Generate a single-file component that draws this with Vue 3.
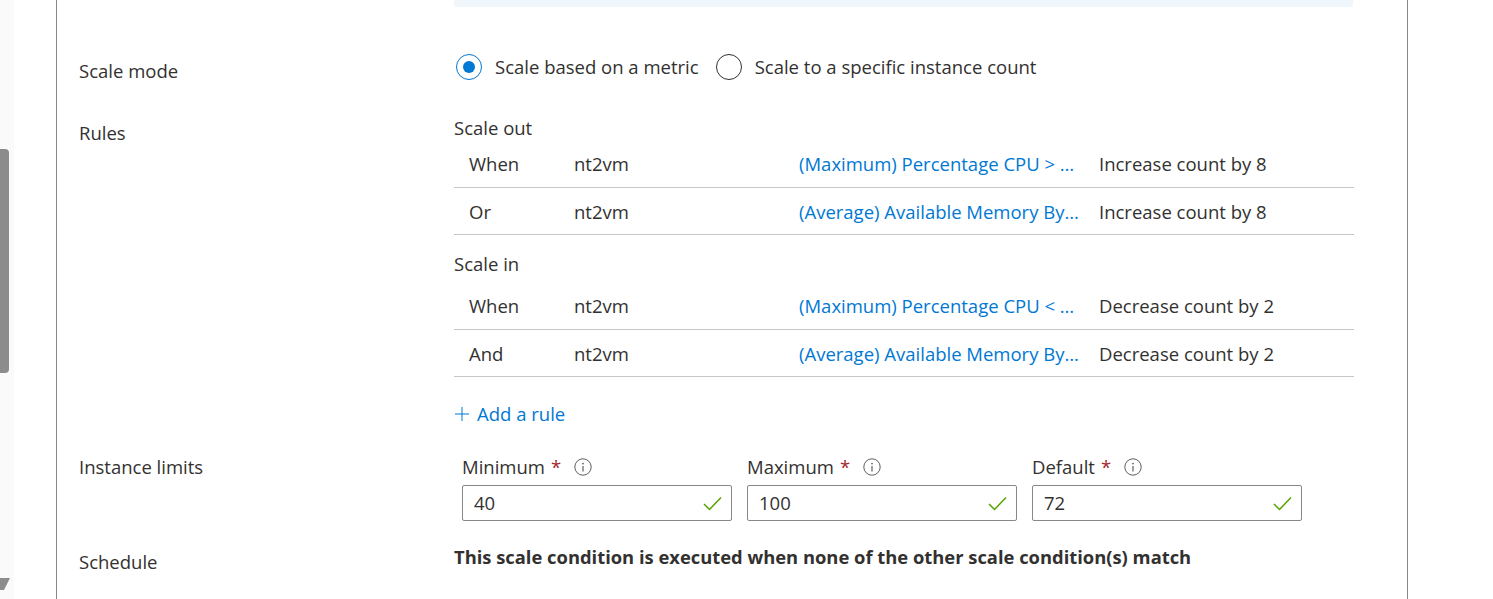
<script setup>
const groups = [
  { title: 'Scale out', rows: [
    { cond: 'When', res: 'nt2vm', metric: '(Maximum) Percentage CPU > 70 percent', action: 'Increase count by 8' },
    { cond: 'Or', res: 'nt2vm', metric: '(Average) Available Memory Bytes < 1 GB', action: 'Increase count by 8' }
  ]},
  { title: 'Scale in', rows: [
    { cond: 'When', res: 'nt2vm', metric: '(Maximum) Percentage CPU < 30 percent', action: 'Decrease count by 2' },
    { cond: 'And', res: 'nt2vm', metric: '(Average) Available Memory Bytes > 4 GB', action: 'Decrease count by 2' }
  ]}
]
const limits = [
  { label: 'Minimum', value: '40' },
  { label: 'Maximum', value: '100' },
  { label: 'Default', value: '72' }
]
</script>

<template>
  <div class="page">
    <aside class="track">
      <div class="thumb"></div>
      <div class="arrow"></div>
    </aside>
    <main class="card">
      <div class="banner"></div>

      <section class="row mode-row">
        <div class="label">Scale mode</div>
        <div class="radios">
          <div class="radio-item first">
            <span class="radio on"><span class="dot"></span></span>
            <span>Scale based on a metric</span>
          </div>
          <div class="radio-item">
            <span class="radio"></span>
            <span>Scale to a specific instance count</span>
          </div>
        </div>
      </section>

      <section class="row rules-row">
        <div class="label">Rules</div>
        <div class="rules">
          <div v-for="g in groups" :key="g.title" class="group">
            <div class="group-title">{{ g.title }}</div>
            <div v-for="r in g.rows" :key="r.metric" class="rule">
              <span class="c-cond">{{ r.cond }}</span>
              <span class="c-res">{{ r.res }}</span>
              <a class="c-metric">{{ r.metric }}</a>
              <span class="c-action">{{ r.action }}</span>
            </div>
          </div>
          <a class="add">
            <svg width="16" height="16" viewBox="0 0 16 16"><path d="M8 1v14M1 8h14" stroke="#0078d4" stroke-width="1" fill="none"/></svg>
            <span>Add a rule</span>
          </a>
        </div>
      </section>

      <section class="row limits-row">
        <div class="label">Instance limits</div>
        <div class="limits">
          <div v-for="l in limits" :key="l.label" class="limit">
            <div class="limit-label">
              <span>{{ l.label }}</span>
              <span class="req">*</span>
              <svg class="info" width="18" height="18" viewBox="0 0 18 18">
                <circle cx="9" cy="9" r="8.2" fill="none" stroke="#605e5c" stroke-width="1"/>
                <circle cx="9" cy="5.6" r="0.9" fill="#605e5c"/>
                <path d="M9 8v5.4" stroke="#605e5c" stroke-width="1.2"/>
              </svg>
            </div>
            <div class="input">
              <span>{{ l.value }}</span>
              <svg width="19" height="15" viewBox="0 0 19 15"><path d="M1 8l5.5 5.5L18 1.5" fill="none" stroke="#57a300" stroke-width="1.5"/></svg>
            </div>
          </div>
        </div>
      </section>

      <section class="row schedule-row">
        <div class="label">Schedule</div>
        <div class="bold">This scale condition is executed when none of the other scale condition(s) match</div>
      </section>
    </main>
  </div>
</template>

<style scoped>
.page {
  display: flex;
  height: 599px;
  overflow: hidden;
  background: #fff;
  color: #323130;
  font-family: "Open Sans", "Noto Sans", sans-serif;
  font-size: 18.5px;
  line-height: 26px;
}
.track {
  position: relative;
  flex: 0 0 14px;
  background: #fafafa;
}
.thumb {
  position: absolute;
  left: 0;
  top: 149px;
  width: 9px;
  height: 224px;
  background: #8c8c8c;
  border-radius: 0 4px 4px 0;
}
.arrow {
  position: absolute;
  left: 0;
  top: 578px;
  width: 10px;
  height: 12px;
  background: #8c8c8c;
  clip-path: polygon(0 0, 100% 0, 40% 100%, 0 100%);
}
.card {
  flex: 0 0 1352px;
  margin-left: 42px;
  box-sizing: border-box;
  height: 599px;
  border-left: 1px solid #8a8886;
  border-right: 1px solid #8a8886;
  padding-left: 22px;
}
.banner {
  margin-left: 375px;
  width: 899px;
  height: 7px;
  background: #eff6fc;
  border-radius: 0 0 2px 2px;
}
.row { display: flex; }
.label { flex: 0 0 375px; }
.mode-row { margin-top: 47px; }
.mode-row .label { padding-top: 4px; }
.radios { display: flex; align-items: flex-start; }
.radio-item { display: flex; align-items: center; gap: 13px; height: 26px; }
.radio-item.first { margin-right: 17px; }
.radio {
  box-sizing: border-box;
  width: 26px;
  height: 26px;
  border: 1px solid #323130;
  border-radius: 50%;
  display: flex;
  align-items: center;
  justify-content: center;
}
.radio.on { border-color: #0078d4; margin-left: 2px; }
.dot { width: 12px; height: 12px; border-radius: 50%; background: #0078d4; }
.rules-row { margin-top: 29px; }
.rules-row .label { padding-top: 11px; margin-top: -4px; }
.rules { width: 900px; }
.group-title { height: 26px; padding-top: 2px; }
.group + .group { margin-top: 14px; }
.group + .group .group-title { height: 32px; }
.rule {
  display: flex;
  align-items: center;
  height: 47px;
  box-sizing: border-box;
  border-bottom: 1px solid #c8c6c4;
  padding-left: 15px;
}
.rule:last-child { padding-top: 2px; }
.c-cond { flex: 0 0 105px; }
.c-res { flex: 0 0 225px; }
.c-metric {
  flex: 0 0 285px;
  margin-right: 15px;
  color: #0078d4;
  white-space: nowrap;
  overflow: hidden;
  text-overflow: ellipsis;
}
.c-action { white-space: nowrap; }
.add {
  display: flex;
  align-items: center;
  gap: 7px;
  margin-top: 24px;
  color: #0078d4;
}
.limits-row { margin-top: 27px; }
.limits-row .label { padding-top: 0; }
.limits { display: flex; gap: 15px; padding-left: 8px; }
.limit { width: 270px; }
.limit-label { display: flex; align-items: center; height: 26px; }
.req { color: #a4262c; margin-left: 6px; }
.info { margin-left: 13px; }
.input {
  box-sizing: border-box;
  height: 36px;
  margin-top: 5px;
  border: 1px solid #8a8886;
  border-radius: 2px;
  display: flex;
  align-items: center;
  justify-content: space-between;
  padding: 0 9px 0 11px;
}
.schedule-row { margin-top: 23px; }
.schedule-row .label { padding-top: 5px; }
.bold { font-weight: 700; font-size: 18.37px; white-space: nowrap; }
</style>
